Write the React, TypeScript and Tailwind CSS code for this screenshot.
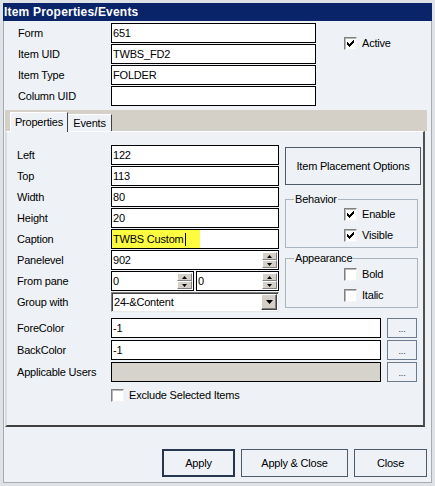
import React from "react";

const BG = "bg-[#eef2f6]";

function CheckMark() {
  return (
    <svg width="7" height="7" viewBox="0 0 7 7" shapeRendering="crispEdges">
      <path d="M0 2h1v1h1v1h1v-1h1v-1h1v-1h1v-1h1v3h-1v1h-1v1h-1v1h-1v1h-1v-1h-1v-1h-1z" fill="#000" />
    </svg>
  );
}

function Check({ checked }: { checked?: boolean }) {
  return (
    <div className="w-[13px] h-[13px] shrink-0 bg-white border border-t-[#808080] border-l-[#808080] border-r-[#f4f4f4] border-b-[#f4f4f4] shadow-[inset_1px_1px_0_#b8b8b8] flex items-center justify-center">
      {checked && <CheckMark />}
    </div>
  );
}

function SpinBtn({ up }: { up?: boolean }) {
  return (
    <div className="h-[8px] w-[15px] bg-[#d4d0c8] border border-t-white border-l-white border-r-[#808080] border-b-[#808080] flex items-center justify-center">
      <svg width="5" height="3" viewBox="0 0 5 3">
        {up ? <path d="M2.5 0L5 3H0Z" fill="#000" /> : <path d="M0 0H5L2.5 3Z" fill="#000" />}
      </svg>
    </div>
  );
}

function Spinner() {
  return (
    <div className="flex flex-col">
      <SpinBtn up />
      <SpinBtn />
    </div>
  );
}

function TextBox({
  value,
  w = "w-[168px]",
  children,
}: {
  value?: React.ReactNode;
  w?: string;
  children?: React.ReactNode;
}) {
  return (
    <div className={`${w} h-[20px] shrink-0 bg-white border border-black flex items-center pl-[1px] pr-[1px]`}>
      <div className="flex-1 whitespace-nowrap overflow-hidden">{value}</div>
      {children}
    </div>
  );
}

function Row({ label, children, lw = "w-[94px]", mb = "mb-[1px]" }: { label?: string; children?: React.ReactNode; lw?: string; mb?: string }) {
  return (
    <div className={`flex items-center h-[20px] ${mb}`}>
      <div className={`${lw} shrink-0 whitespace-nowrap`}>{label}</div>
      {children}
    </div>
  );
}

function DotsBtn() {
  return (
    <div className="ml-[6px] w-[30px] h-[20px] border border-[#6c7c8c] flex items-end justify-center pb-[3px] text-[9px] leading-none text-[#333]">
      ...
    </div>
  );
}

function Group({ title, h, pt, children }: { title: string; h: string; pt: string; children: React.ReactNode }) {
  return (
    <div className={`relative w-[133px] ${h} border border-[#aab4be] ${pt} pl-[58px]`}>
      <span className={`absolute -top-[8px] left-[8px] px-[1px] ${BG} leading-[14px]`}>{title}</span>
      {children}
    </div>
  );
}

function CheckRow({ label, checked }: { label: string; checked?: boolean }) {
  return (
    <div className="flex items-center h-[13px] mb-[8px]">
      <Check checked={checked} />
      <span className="ml-[5px]">{label}</span>
    </div>
  );
}

function Button({ label, w, focused }: { label: string; w: string; focused?: boolean }) {
  return (
    <div
      className={`${w} h-[28px] flex items-center justify-center ${
        focused ? "border-2 border-[#27364f]" : "border border-[#4c5a6a]"
      }`}
    >
      {label}
    </div>
  );
}

export default function App() {
  return (
    <div
      className={`w-[435px] h-[486px] ${BG} border-[3px] border-[#dfe3e7] shadow-[inset_0_0_0_1px_#a8acb0] text-[11px] tracking-[-0.2px] text-black leading-none font-['Liberation_Sans',Arial,sans-serif] flex flex-col overflow-hidden`}
    >
      {/* Title bar */}
      <div className="h-[18px] bg-[#0a246a] text-white font-bold text-[12px] tracking-[0.2px] flex items-center pl-[1px] shrink-0">
        Item Properties/Events
      </div>

      {/* Top fields */}
      <div className="flex pt-[2px] pl-[15px]">
        <div className="flex flex-col">
          <Row label="Form" lw="w-[93px]">
            <TextBox w="w-[205px]" value="651" />
          </Row>
          <Row label="Item UID" lw="w-[93px]">
            <TextBox w="w-[205px]" value="TWBS_FD2" />
          </Row>
          <Row label="Item Type" lw="w-[93px]">
            <TextBox w="w-[205px]" value="FOLDER" />
          </Row>
          <Row label="Column UID" lw="w-[93px]">
            <TextBox w="w-[205px]" value="" />
          </Row>
        </div>
        <div className="ml-[28px] pt-[14px] flex items-center h-[13px] box-content">
          <Check checked />
          <span className="ml-[5px]">Active</span>
        </div>
      </div>

      {/* Tab control */}
      <div className="ml-[2px] mt-[3px] w-[422px] flex flex-col">
        <div className="h-[21px] bg-[#d4d0c8] flex items-end pl-[5px]">
          <div className={`relative z-10 w-[58px] h-[20px] -mb-[1px] ${BG} border-t border-l border-white border-r border-r-[#404040] flex items-center justify-center`}>
            Properties
          </div>
          <div className={`w-[44px] h-[17px] ${BG} border-t border-white border-r border-r-[#404040] flex items-center justify-center`}>
            Events
          </div>
        </div>
        <div className={`h-[296px] w-[420px] ${BG} border-t border-t-white border-l-2 border-l-[#d8dde2] border-r-2 border-r-[#505050] border-b-2 border-b-[#404040] pt-[13px] pl-[10px]`}>
          <div className="flex h-[168px]">
            <div className="flex flex-col">
              <Row label="Left">
                <TextBox value="122" />
              </Row>
              <Row label="Top">
                <TextBox value="113" />
              </Row>
              <Row label="Width">
                <TextBox value="80" />
              </Row>
              <Row label="Height">
                <TextBox value="20" />
              </Row>
              <Row label="Caption">
                <div className="w-[168px] h-[20px] shrink-0 bg-white border border-black flex items-stretch">
                  <div className="bg-[#fcfc40] w-[88px] flex items-center pl-[1px] whitespace-nowrap">
                    TWBS Custom
                    <span className="inline-block w-[1px] h-[13px] bg-black ml-[1px]" />
                  </div>
                </div>
              </Row>
              <Row label="Panelevel">
                <TextBox value="902">
                  <Spinner />
                </TextBox>
              </Row>
              <Row label="From pane">
                <TextBox w="w-[83px]" value="0">
                  <Spinner />
                </TextBox>
                <div className="w-[2px]" />
                <TextBox w="w-[83px]" value="0">
                  <Spinner />
                </TextBox>
              </Row>
              <Row label="Group with">
                <div className="w-[168px] h-[20px] shrink-0 bg-white border border-t-[#808080] border-l-[#808080] border-r-[#e8e8e8] border-b-[#e8e8e8] shadow-[inset_1px_1px_0_#404040] flex items-center pl-[2px] pr-[1px]">
                  <div className="flex-1">24-&amp;Content</div>
                  <div className="w-[16px] h-[16px] bg-[#d4d0c8] border border-t-white border-l-white border-r-[#404040] border-b-[#404040] shadow-[inset_-1px_-1px_0_#808080] flex items-center justify-center">
                    <svg width="7" height="4" viewBox="0 0 7 4">
                      <path d="M0 0H7L3.5 4Z" fill="#000" />
                    </svg>
                  </div>
                </div>
              </Row>
            </div>
            <div className="ml-[6px] pt-[2px] flex flex-col">
              <div className="w-[136px] h-[38px] border border-[#4c5a6a] flex items-center justify-center">
                Item Placement Options
              </div>
              <div className="mt-[14px]">
                <Group title="Behavior" h="h-[49px]" pt="pt-[8px]">
                  <CheckRow label="Enable" checked />
                  <CheckRow label="Visible" checked />
                </Group>
              </div>
              <div className="mt-[10px]">
                <Group title="Appearance" h="h-[50px]" pt="pt-[9px]">
                  <CheckRow label="Bold" />
                  <CheckRow label="Italic" />
                </Group>
              </div>
            </div>
          </div>

          <div className="mt-[5px]">
            <Row label=" ForeColor" mb="mb-[2px]">
              <TextBox w="w-[270px]" value="-1" />
              <DotsBtn />
            </Row>
            <Row label="BackColor" mb="mb-[2px]">
              <TextBox w="w-[270px]" value="-1" />
              <DotsBtn />
            </Row>
            <Row label="Applicable Users" mb="mb-[2px]">
              <div className="w-[270px] h-[20px] shrink-0 bg-[#d6d3cc] border border-black" />
              <DotsBtn />
            </Row>
            <div className="flex items-center h-[13px] mt-[7px] pl-[94px]">
              <Check />
              <span className="ml-[5px]">Exclude Selected Items</span>
            </div>
          </div>
        </div>
      </div>

      {/* Bottom buttons */}
      <div className="mt-[22px] flex justify-end pr-[5px] gap-[6px]">
        <Button label="Apply" w="w-[73px]" focused />
        <Button label="Apply &amp; Close" w="w-[107px]" />
        <Button label="Close" w="w-[73px]" />
      </div>
    </div>
  );
}
